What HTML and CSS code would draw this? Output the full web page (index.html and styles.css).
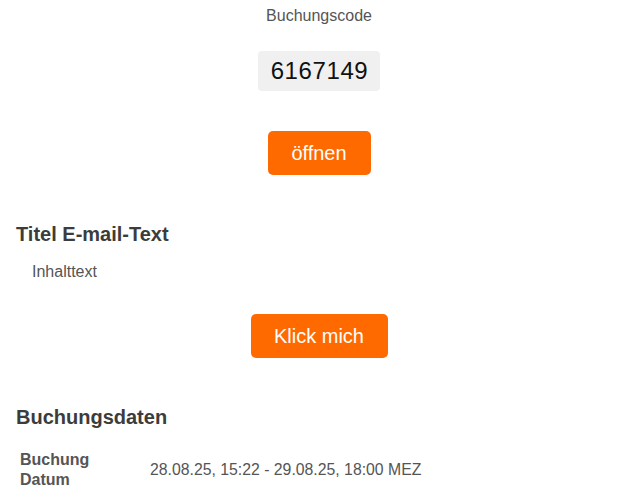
FILE: index.html
```html
<!DOCTYPE html>
<html lang="de">
<head>
<meta charset="utf-8">
<link rel="stylesheet" href="styles.css">
</head>
<body>
<div class="page">
  <div class="center">
    <div class="label">Buchungscode</div>
    <div class="code">6167149</div>
    <a class="btn btn-open">öffnen</a>
  </div>
  <h2 class="title">Titel E-mail-Text</h2>
  <p class="content">Inhalttext</p>
  <div class="center">
    <a class="btn btn-click">Klick mich</a>
  </div>
  <h2 class="title title-data">Buchungsdaten</h2>
  <table class="data">
    <tr>
      <th>Buchung<br>Datum</th>
      <td>28.08.25, 15:22 - 29.08.25, 18:00 MEZ</td>
    </tr>
  </table>
</div>
</body>
</html>
```
FILE: styles.css
```css
html, body {
  margin: 0;
  padding: 0;
  background: #ffffff;
}
body {
  font-family: "Liberation Sans", Arial, sans-serif;
  color: #555555;
}
.page {
  width: 638px;
  padding: 0 16px;
  box-sizing: border-box;
}
.center {
  display: flex;
  flex-direction: column;
  align-items: center;
}
.label {
  font-size: 16px;
  line-height: 18px;
  margin-top: 7px;
  color: #555555;
}
.code {
  margin-top: 26px;
  background: #f0f0f0;
  border-radius: 4px;
  height: 40px;
  line-height: 40px;
  padding: 0 12px 0 13px;
  font-size: 24px;
  letter-spacing: 0.6px;
  color: #111111;
}
.btn {
  display: block;
  background: #ff6a00;
  color: #ffffff;
  border-radius: 5px;
  height: 44px;
  line-height: 44px;
  box-sizing: border-box;
  text-align: center;
}
.btn-open {
  margin-top: 40px;
  width: 103px;
  font-size: 20px;
}
.title {
  margin: 47px 0 0 0;
  font-size: 20px;
  line-height: 24px;
  font-weight: bold;
  color: #3c3c3c;
}
.content {
  margin: 17px 0 0 16px;
  font-size: 16px;
  line-height: 18px;
  color: #555555;
}
.btn-click {
  margin-top: 33px;
  width: 137px;
  font-size: 20px;
}
.title-data {
  margin-top: 47px;
}
.data {
  margin-top: 21px;
  border-collapse: collapse;
}
.data th {
  text-align: left;
  font-size: 16px;
  line-height: 20px;
  font-weight: bold;
  color: #555555;
  padding: 0 4px;
  width: 126px;
  vertical-align: middle;
}
.data td {
  font-size: 15.8px;
  line-height: 20px;
  color: #555555;
  padding: 0;
  vertical-align: middle;
}
```
